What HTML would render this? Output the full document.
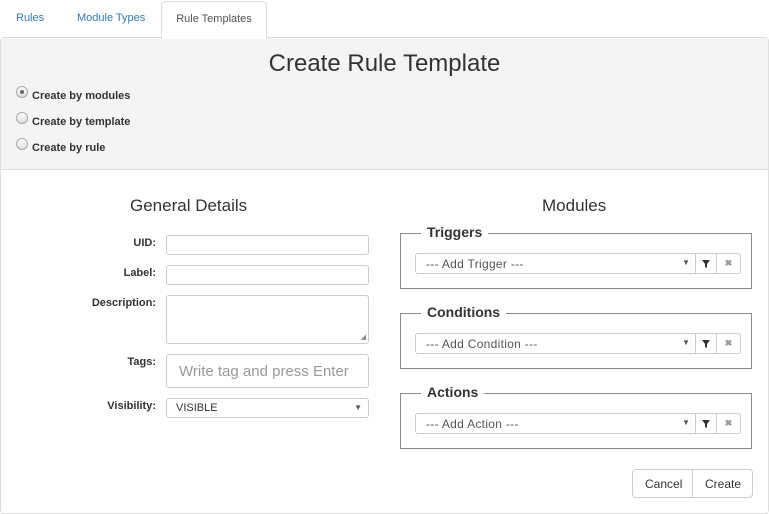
<!DOCTYPE html>
<html><head><style>
*{box-sizing:border-box}
body{margin:0;width:769px;height:514px;background:#fff;font-family:"Liberation Sans",Arial,sans-serif;font-size:11px;color:#333;position:relative;overflow:hidden}
.a{position:absolute}
.tab{position:absolute;top:12px;color:#337ab7;font-size:11px}
.lbl{position:absolute;right:613px;font-weight:bold;font-size:11px;color:#333}
.inp{position:absolute;left:166px;width:203px;border:1px solid #ccc;border-radius:3px;background:#fff}
.radio{position:absolute;left:16px;width:12px;height:12px;border-radius:50%;border:1px solid #aaa;background:linear-gradient(#fff,#ddd)}
.rl{position:absolute;left:32px;font-weight:bold;font-size:11px}
.fs{position:absolute;left:400px;width:352px;height:56px;border:1px solid #888}
.lg{position:absolute;left:20px;top:-10px;background:#fff;padding:0 6px;font-size:14px;font-weight:bold;color:#333}
.sel{position:absolute;left:14px;top:19px;width:326px;height:21px;border:1px solid #ccc;border-radius:3px;background:#fff}
.sel .t{position:absolute;left:10px;top:3px;color:#555;font-size:12px;letter-spacing:0.3px}
.sel .ar{position:absolute;left:266px;top:4px;font-size:8px;color:#555}
.sel .f{position:absolute;left:279px;top:0;width:21px;height:19px;border-left:1px solid #ccc}
.sel .x{position:absolute;left:300px;top:0;width:24px;height:19px;border-left:1px solid #ccc;text-align:center;color:#999;font-size:9px;line-height:19px;font-weight:bold}
</style></head><body>
<div class="tab" style="left:16px">Rules</div>
<div class="tab" style="left:77px">Module Types</div>
<div class="a" style="left:161px;top:1px;width:106px;height:38px;border:1px solid #ddd;border-bottom:none;border-radius:4px 4px 0 0;background:#fff;z-index:2;color:#555;text-align:center;padding-top:11px">Rule Templates</div>
<div class="a" style="left:0;top:37px;width:769px;height:477px;border:1px solid #ddd;border-radius:4px;background:#fff"></div>
<div class="a" style="left:1px;top:38px;width:767px;height:132px;background:#f4f4f4;border-bottom:1px solid #ddd"></div>
<div class="a" style="left:0;top:50px;width:769px;text-align:center;font-size:24px;color:#333">Create Rule Template</div>
<div class="radio" style="top:86px"><div class="a" style="left:3px;top:3px;width:4px;height:4px;border-radius:50%;background:#666"></div></div>
<div class="rl" style="top:90px">Create by modules</div>
<div class="radio" style="top:112px"></div><div class="rl" style="top:116px">Create by template</div>
<div class="radio" style="top:138px"></div><div class="rl" style="top:142px">Create by rule</div>

<div class="a" style="left:130px;top:196px;font-size:17px">General Details</div>
<div class="a" style="left:542px;top:196px;font-size:17px">Modules</div>

<div class="lbl" style="top:237px">UID:</div><div class="inp" style="top:235px;height:20px"></div>
<div class="lbl" style="top:267px">Label:</div><div class="inp" style="top:265px;height:20px"></div>
<div class="lbl" style="top:297px">Description:</div><div class="inp" style="top:295px;height:49px"><div class="a" style="right:2px;bottom:2px;font-size:7px;color:#888">◢</div></div>
<div class="lbl" style="top:356px">Tags:</div><div class="inp" style="top:354px;height:34px;color:#999;font-size:15px;padding:8px 0 0 12px">Write tag and press Enter</div>
<div class="lbl" style="top:400px">Visibility:</div><div class="inp" style="top:398px;height:20px;padding:3px 0 0 9px;color:#333">VISIBLE<span class="a" style="right:6px;top:4px;font-size:8px;color:#555">▼</span></div>

<div class="fs" style="top:233px"><div class="lg">Triggers</div><div class="sel"><span class="t">--- Add Trigger ---</span><span class="ar">▼</span><div class="f"><svg width="20" height="19"><path d="M6 6h8l-3 4v4l-2-1v-3z" fill="#333"/></svg></div><div class="x">✖</div></div></div>
<div class="fs" style="top:313px"><div class="lg">Conditions</div><div class="sel"><span class="t">--- Add Condition ---</span><span class="ar">▼</span><div class="f"><svg width="20" height="19"><path d="M6 6h8l-3 4v4l-2-1v-3z" fill="#333"/></svg></div><div class="x">✖</div></div></div>
<div class="fs" style="top:393px"><div class="lg">Actions</div><div class="sel"><span class="t">--- Add Action ---</span><span class="ar">▼</span><div class="f"><svg width="20" height="19"><path d="M6 6h8l-3 4v4l-2-1v-3z" fill="#333"/></svg></div><div class="x">✖</div></div></div>

<div class="a" style="left:632px;top:469px;width:121px;height:29px;border:1px solid #ccc;border-radius:4px;background:#fff"></div>
<div class="a" style="left:692px;top:470px;width:1px;height:27px;background:#ccc"></div>
<div class="a" style="left:645px;top:477px;font-size:12px">Cancel</div>
<div class="a" style="left:705px;top:477px;font-size:12px">Create</div>
</body></html>
